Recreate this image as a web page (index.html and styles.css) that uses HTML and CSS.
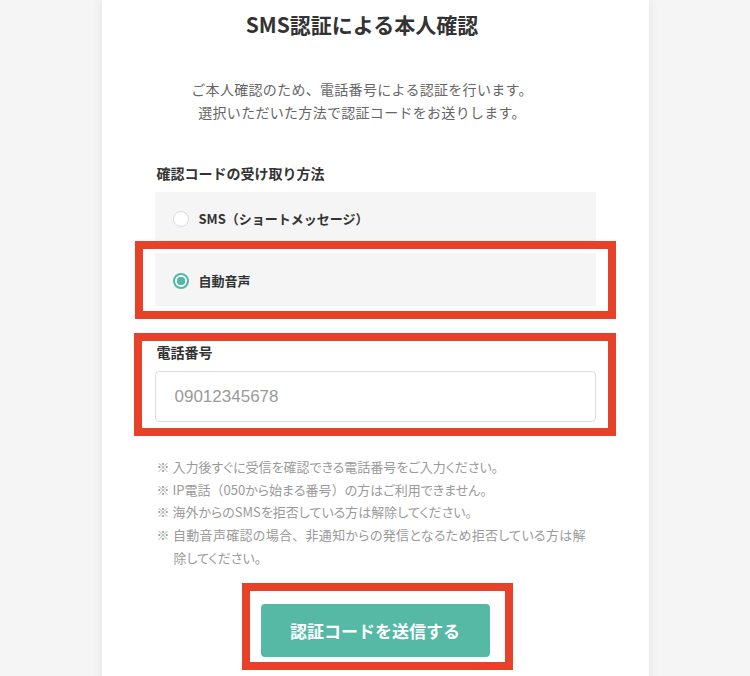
FILE: index.html
```html
<!DOCTYPE html>
<html lang="ja">
<head>
  <meta charset="utf-8">
  <title>SMS認証による本人確認</title>
  <link rel="stylesheet" href="styles.css">
</head>
<body>
<main class="card">
  <header class="intro">
    <h1 class="title">SMS認証による本人確認</h1>
    <p class="lead">ご本人確認のため、電話番号による認証を行います。<br>選択いただいた方法で認証コードをお送りします。</p>
  </header>

  <section class="field">
    <h2 class="label">確認コードの受け取り方法</h2>
    <div class="options">
      <label class="option"><span class="radio"></span>SMS（ショートメッセージ）</label>
      <label class="option"><span class="radio checked"></span>自動音声</label>
    </div>
  </section>

  <section class="field phone">
    <h2 class="label">電話番号</h2>
    <input class="phone-input" type="tel" placeholder="09012345678">
  </section>

  <ul class="notes">
    <li>入力後すぐに受信を確認できる電話番号をご入力ください。</li>
    <li>IP電話<span class="fw">（</span>050から始まる番号<span class="fw">）</span>の方はご利用できません。</li>
    <li>海外からのSMSを拒否している方は解除してください。</li>
    <li>自動音声確認の場合<span class="fw">、</span>非通知からの発信となるため拒否している方は解除してください。</li>
  </ul>

  <div class="actions">
    <button class="submit" type="button">認証コードを送信する</button>
  </div>

  <!-- red annotation frames over the screenshot -->
  <div class="mark mark-voice"></div>
  <div class="mark mark-phone"></div>
  <div class="mark mark-submit"></div>
</main>
</body>
</html>
```

FILE: styles.css
```css
body {
  margin: 0;
  background-color: #f5f5f5;
  font-family: "Noto Sans CJK JP", "Noto Sans", sans-serif;
  color: #333;
}

.card {
  position: relative;
  width: 547px;
  min-height: 700px;
  margin: 0 auto;
  padding: 10px 53px 0;
  box-sizing: border-box;
  background-color: #fff;
  box-shadow: 0 0 10px rgba(0, 0, 0, 0.08);
}

.intro {
  padding-right: 26px;
  text-align: center;
}

.title {
  margin: 0;
  font-size: 21px;
  line-height: 28px;
  font-weight: bold;
  color: #333;
}

.lead {
  margin: 40px 0 0;
  font-size: 14px;
  line-height: 23px;
  letter-spacing: 0.3px;
  color: #666;
}

.field {
  margin-top: 39px;
}

.field.phone {
  margin-top: 36px;
}

.label {
  margin: 0 0 9px 2px;
  font-size: 14px;
  line-height: 20px;
  font-weight: bold;
  color: #333;
}

.options {
  display: flex;
  flex-direction: column;
  gap: 8px;
}

.option {
  display: flex;
  align-items: center;
  height: 53px;
  padding-left: 18px;
  background-color: #f5f5f5;
  font-size: 13px;
  font-weight: bold;
  color: #333;
}

.option + .option {
  padding-top: 2px;
  box-sizing: border-box;
}

.radio {
  width: 14px;
  height: 14px;
  margin-right: 10px;
  border: 1px solid #dcdcdc;
  border-radius: 50%;
  background-color: #fff;
  box-sizing: content-box;
}

.radio.checked {
  width: 12px;
  height: 12px;
  border: 2px solid #4fb9a3;
  background: radial-gradient(circle, #4fb9a3 0 4px, #fff 4.5px);
}

.phone-input {
  display: block;
  width: 100%;
  height: 51px;
  padding: 0 19px;
  box-sizing: border-box;
  border: 1px solid #ddd;
  border-radius: 4px;
  font-family: "Liberation Sans", Arial, sans-serif;
  font-size: 17px;
  color: #333;
}

.phone-input::placeholder {
  color: #9a9a9a;
}

.notes {
  list-style: none;
  margin: 34px 0 0;
  padding: 0 10px 0 2px;
  font-size: 13px;
  line-height: 22.7px;
  font-feature-settings: "palt";
  text-align: justify;
  color: #9a9a9a;
}

.notes li {
  padding-left: 17px;
  text-indent: -17px;
}

.notes li::before {
  content: "※ ";
  font-feature-settings: normal;
}

.notes .fw {
  font-feature-settings: normal;
}

.actions {
  display: flex;
  justify-content: center;
  margin-top: 34px;
}

.submit {
  width: 229px;
  height: 53px;
  border: none;
  border-radius: 4px;
  background-color: #55b9a5;
  font-family: "Noto Sans CJK JP", sans-serif;
  font-size: 17px;
  font-weight: bold;
  color: #fff;
}

.mark {
  position: absolute;
  border: 8px solid #e84129;
  box-sizing: border-box;
}

.mark-voice {
  left: 33px;
  top: 241px;
  width: 481px;
  height: 78px;
}

.mark-phone {
  left: 32px;
  top: 333px;
  width: 482px;
  height: 103px;
}

.mark-submit {
  left: 140px;
  top: 583px;
  width: 271px;
  height: 87px;
}
```
